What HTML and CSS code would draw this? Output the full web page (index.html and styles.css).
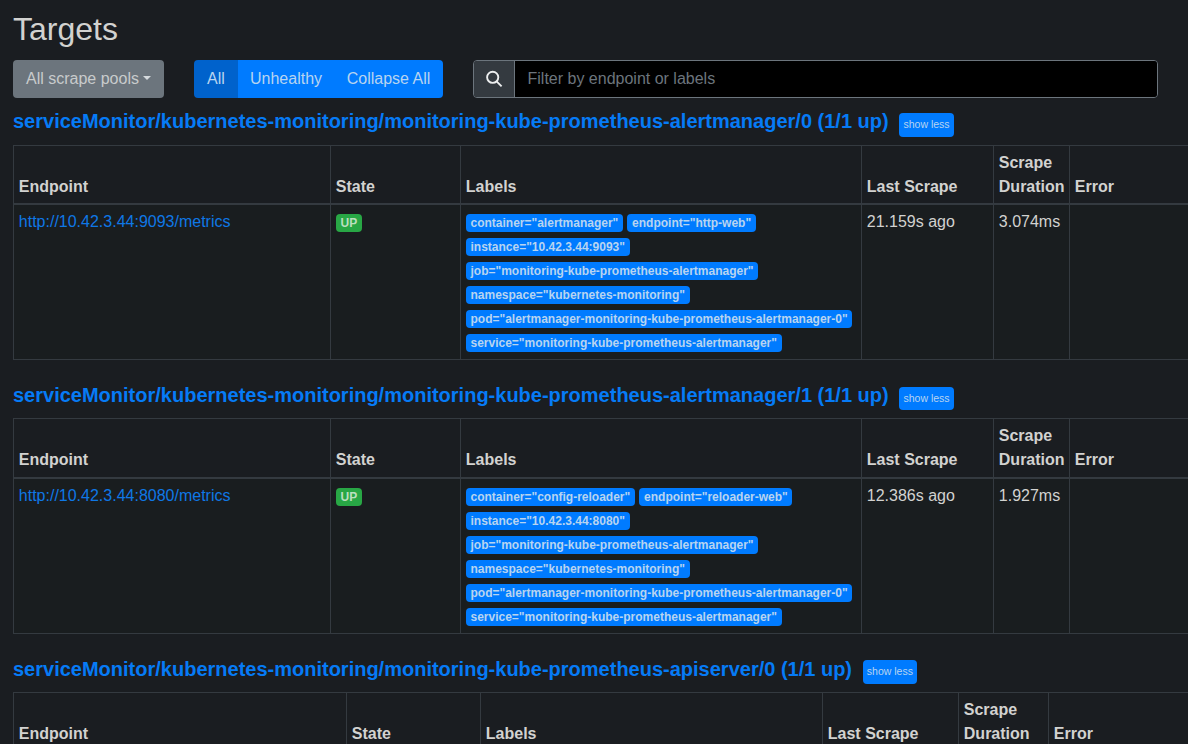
FILE: index.html
```html
<!DOCTYPE html>
<html lang="en">
<head>
<meta charset="utf-8">
<title>Targets</title>
<link rel="stylesheet" href="styles.css">
</head>
<body>
<main class="page">
<h2 class="title">Targets</h2>
<div class="toolbar">
<button class="btn pools">All scrape pools<span class="caret"></span></button>
<div class="group"><button class="btn active">All</button><button class="btn unhealthy">Unhealthy</button><button class="btn">Collapse All</button></div>
<div class="search">
<span class="search-icon"><svg width="18" height="18" viewBox="0 0 18 18" fill="none" stroke="#eceeef" stroke-width="1.9"><circle cx="7.7" cy="7.3" r="5.6"/><path d="M11.6 11.3L16.6 16.3"/></svg></span>
<input class="filter" type="text" placeholder="Filter by endpoint or labels">
</div>
</div>

<section class="pool">
<h3 class="pool-head"><a>serviceMonitor/kubernetes-monitoring/monitoring-kube-prometheus-alertmanager/0 (1/1 up)</a><button class="less">show less</button></h3>
<table class="targets">
<colgroup><col class="c1"><col class="c2"><col class="c3"><col class="c4"><col class="c5"><col class="c6"></colgroup>
<thead><tr><th>Endpoint</th><th>State</th><th>Labels</th><th>Last Scrape</th><th>Scrape Duration</th><th>Error</th></tr></thead>
<tbody><tr><td><a>http://10.42.3.44:9093/metrics</a></td><td><span class="badge up">UP</span></td>
<td><span class="badge">container="alertmanager"</span> <span class="badge">endpoint="http-web"</span> <span class="badge">instance="10.42.3.44:9093"</span> <span class="badge">job="monitoring-kube-prometheus-alertmanager"</span> <span class="badge">namespace="kubernetes-monitoring"</span> <span class="badge">pod="alertmanager-monitoring-kube-prometheus-alertmanager-0"</span> <span class="badge">service="monitoring-kube-prometheus-alertmanager"</span></td>
<td>21.159s ago</td><td>3.074ms</td><td></td></tr></tbody>
</table>
</section>

<section class="pool">
<h3 class="pool-head"><a>serviceMonitor/kubernetes-monitoring/monitoring-kube-prometheus-alertmanager/1 (1/1 up)</a><button class="less">show less</button></h3>
<table class="targets">
<colgroup><col class="c1"><col class="c2"><col class="c3"><col class="c4"><col class="c5"><col class="c6"></colgroup>
<thead><tr><th>Endpoint</th><th>State</th><th>Labels</th><th>Last Scrape</th><th>Scrape Duration</th><th>Error</th></tr></thead>
<tbody><tr><td><a>http://10.42.3.44:8080/metrics</a></td><td><span class="badge up">UP</span></td>
<td><span class="badge">container="config-reloader"</span> <span class="badge">endpoint="reloader-web"</span> <span class="badge">instance="10.42.3.44:8080"</span> <span class="badge">job="monitoring-kube-prometheus-alertmanager"</span> <span class="badge">namespace="kubernetes-monitoring"</span> <span class="badge">pod="alertmanager-monitoring-kube-prometheus-alertmanager-0"</span> <span class="badge">service="monitoring-kube-prometheus-alertmanager"</span></td>
<td>12.386s ago</td><td>1.927ms</td><td></td></tr></tbody>
</table>
</section>

<section class="pool last">
<h3 class="pool-head"><a>serviceMonitor/kubernetes-monitoring/monitoring-kube-prometheus-apiserver/0 (1/1 up)</a><button class="less">show less</button></h3>
<table class="targets apiserver">
<colgroup><col class="c1"><col class="c2"><col class="c3"><col class="c4"><col class="c5"><col class="c6"></colgroup>
<thead><tr><th>Endpoint</th><th>State</th><th>Labels</th><th>Last Scrape</th><th>Scrape Duration</th><th>Error</th></tr></thead>
</table>
</section>
</main>
</body>
</html>
```
FILE: styles.css
```css
* { box-sizing: border-box; }
html, body { height: 100%; overflow: hidden; }
body {
  margin: 0;
  background: #1a1d21;
  color: #d2d2d0;
  font: 16px/24px "Liberation Sans", Arial, sans-serif;
}
.page { height: 100vh; overflow: hidden; padding: 10px 0 0 13px; }
.title { margin: 0 0 12px; font-size: 32px; line-height: 38px; font-weight: 400; }
.toolbar { display: flex; height: 38px; }
.btn {
  height: 38px;
  padding: 0 12px 1px;
  border: 0;
  background: #007bff;
  color: #b8d4f0;
  font: inherit;
  white-space: nowrap;
}
.pools {
  width: 151px;
  padding-left: 13px;
  margin-right: 30px;
  border-radius: 4px;
  background: #6c757d;
  color: #c8cbcc;
  text-align: left;
}
.caret {
  display: inline-block;
  margin-left: 4px;
  vertical-align: 4px;
  border: 4.8px solid transparent;
  border-top-color: #d5dadd;
  border-bottom: 0;
}
.group { display: flex; width: 249px; margin-right: 30px; border-radius: 4px; overflow: hidden; }
.group .active { width: 44px; background: #0062cc; }
.group .unhealthy { width: 96px; }
.group .btn:last-child { width: 109px; }
.search {
  display: flex;
  width: 685px;
  border: 1px solid #6c757d;
  border-radius: 4px;
  overflow: hidden;
}
.search-icon {
  display: flex;
  width: 41px;
  align-items: center;
  justify-content: center;
  background: #343a40;
  border-right: 1px solid #6c757d;
}
.filter {
  flex: 1;
  padding: 0 12.5px 1px;
  border: 0;
  outline: 0;
  background: #000;
  color: #d2d2d0;
  font: inherit;
}
.filter::placeholder { color: #6c757d; opacity: 1; }
.pool { height: 273.6px; }
.pool-head {
  display: flex;
  height: 46.8px;
  margin: 0;
  padding-top: 11.45px;
  font-size: 20px;
  line-height: 24px;
  white-space: nowrap;
}
.pool-head a { color: #067bf6; }
.less {
  width: 54.6px;
  height: 23.6px;
  margin: 3.6px 0 0 10.6px;
  padding: 0 0 .6px;
  border: 0;
  border-radius: 4px;
  background: #007bff;
  color: #b8d4f0;
  font: 10.5px/15px "Liberation Sans", Arial, sans-serif;
}
.targets {
  width: 1189px;
  table-layout: fixed;
  border-collapse: separate;
  border-spacing: 0;
  border-bottom: 1px solid #343a40;
}
.last .targets { border-bottom: 0; }
.c1 { width: 317px; }
.c2 { width: 130px; }
.c3 { width: 401px; }
.c4 { width: 132px; }
.c5 { width: 76px; }
.apiserver .c1 { width: 333px; }
.apiserver .c2 { width: 134px; }
.apiserver .c3 { width: 342px; }
.apiserver .c4 { width: 136px; }
.apiserver .c5 { width: 90px; }
.targets th {
  height: 60.2px;
  padding: 5px 4px 4.2px 4.8px;
  border: solid #343a40;
  border-width: 1px 0 2px 1px;
  text-align: left;
  vertical-align: bottom;
}
.targets td {
  height: 154.1px;
  padding: 5.1px 4px 5px 4.8px;
  border-left: 1px solid #343a40;
  background: #191d1f;
  vertical-align: top;
}
.targets td a { color: #0f78e6; }
.badge {
  display: inline-block;
  padding: 3px 4.7px;
  border-radius: 4px;
  background: #007bff;
  color: #b8d4f0;
  font-size: 12px;
  line-height: 12px;
  font-weight: 700;
  white-space: nowrap;
  vertical-align: baseline;
}
.up { background: #28a745; color: #bbdfbf; }
```
